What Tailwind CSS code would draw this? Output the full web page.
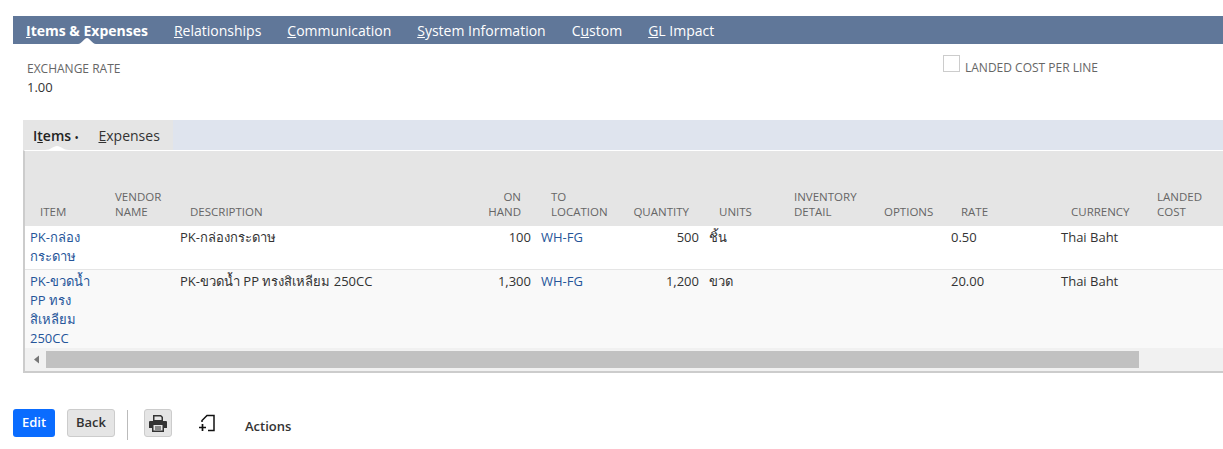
<!DOCTYPE html>
<html lang="en">
<head>
    <meta charset="UTF-8">
    <title>Items &amp; Expenses</title>
    <script src="https://cdn.jsdelivr.net/npm/@tailwindcss/browser@4"></script>
</head>
<body class="bg-white overflow-hidden font-['Open_Sans','DejaVu_Sans',sans-serif] text-[13px] text-[#333]">

    <!-- main tabs -->
    <div class="pt-4 pl-[13px]">
        <nav class="relative flex h-7 items-center gap-[26px] bg-[#607799] pl-[13px] text-[14px] text-white">
            <a class="font-bold"><u>I</u>tems &amp; Expenses</a>
            <a><u>R</u>elationships</a>
            <a><u>C</u>ommunication</a>
            <a><u>S</u>ystem Information</a>
            <a>C<u>u</u>stom</a>
            <a><u>G</u>L Impact</a>
            <svg class="absolute left-[65px] bottom-0" width="18" height="6" viewBox="0 0 18 6"><path d="M0 6 C4 6 6 0 9 0 C12 0 14 6 18 6 Z" fill="#fff"/></svg>
        </nav>
    </div>

    <!-- header fields -->
    <div class="flex h-[76px] pl-[27px]">
        <div class="w-[916px] pt-[17px]">
            <div class="text-[12px] leading-[15px] text-[#666]">EXCHANGE RATE</div>
            <div class="mt-[2px] leading-[18px]">1.00</div>
        </div>
        <div class="flex items-start gap-[5px] pt-[11px]">
            <span class="h-[17px] w-[17px] border border-[#ccc]"></span>
            <span class="pt-[5px] text-[12px] leading-[15px] text-[#666]">LANDED COST PER LINE</span>
        </div>
    </div>

    <!-- sub tabs -->
    <div class="ml-[23px]">
        <div class="flex h-[30px] bg-[#dfe4ee]">
            <div class="relative flex w-[150px] items-center gap-5 bg-[#e5e5e5] pl-[10px] text-[14px]">
                <a class="font-semibold text-[#222]">I<u>t</u>ems <span class="text-[10px]">•</span></a>
                <a><u>E</u>xpenses</a>
                <svg class="absolute left-[22px] bottom-0" width="24" height="4" viewBox="0 0 24 4"><path d="M0 4 C6 4 8 0 12 0 C16 0 18 4 24 4 Z" fill="#fff"/></svg>
            </div>
        </div>

        <!-- item list -->
        <div class="overflow-hidden border-t border-b-2 border-l-2 border-[#ccc] border-t-white">
            <table class="w-[1300px] table-fixed border-collapse text-left">
                <colgroup>
                    <col class="w-[75px]"><col class="w-[75px]"><col class="w-[291px]"><col class="w-[70px]">
                    <col class="w-[83px]"><col class="w-[85px]"><col class="w-[75px]"><col class="w-[90px]">
                    <col class="w-[77px]"><col class="w-[110px]"><col class="w-[86px]"><col class="w-[183px]">
                </colgroup>
                <thead class="bg-[#e5e5e5] text-[11.5px] font-normal leading-[15px] text-[#666]">
                    <tr class="h-[75px] align-bottom">
                        <th class="pb-[7px] pl-[15px] font-normal">ITEM</th>
                        <th class="pb-[7px] pl-[15px] font-normal">VENDOR<br>NAME</th>
                        <th class="pb-[7px] pl-[15px] font-normal">DESCRIPTION</th>
                        <th class="pb-[7px] pr-[15px] text-right font-normal">ON<br>HAND</th>
                        <th class="pb-[7px] pl-[15px] font-normal">TO<br>LOCATION</th>
                        <th class="pb-[7px] pr-[15px] text-right font-normal">QUANTITY</th>
                        <th class="pb-[7px] pl-[15px] font-normal">UNITS</th>
                        <th class="pb-[7px] pl-[15px] font-normal">INVENTORY<br>DETAIL</th>
                        <th class="pb-[7px] pl-[15px] font-normal">OPTIONS</th>
                        <th class="pb-[7px] pl-[15px] font-normal">RATE</th>
                        <th class="pb-[7px] pl-[15px] font-normal">CURRENCY</th>
                        <th class="pb-[7px] pl-[15px] font-normal">LANDED<br>COST</th>
                    </tr>
                </thead>
                <tbody class="align-top leading-[19px]">
                    <tr class="h-[43px] border-b border-[#e5e5e5] bg-white">
                        <td class="px-[5px] pt-[2px] text-[#255599]">PK-กล่อง<br>กระดาษ</td>
                        <td></td>
                        <td class="px-[5px] pt-[2px]">PK-กล่องกระดาษ</td>
                        <td class="px-[5px] pt-[2px] text-right">100</td>
                        <td class="px-[5px] pt-[2px] text-[#255599]">WH-FG</td>
                        <td class="px-[5px] pt-[2px] text-right">500</td>
                        <td class="px-[5px] pt-[2px]">ชิ้น</td>
                        <td></td>
                        <td></td>
                        <td class="px-[5px] pt-[2px]">0.50</td>
                        <td class="px-[5px] pt-[2px]">Thai Baht</td>
                        <td></td>
                    </tr>
                    <tr class="h-[79px] bg-[#f9f9f9]">
                        <td class="px-[5px] pt-[2px] text-[#255599]">PK-ขวดน้ำ<br>PP ทรง<br>สิเหลียม<br>250CC</td>
                        <td></td>
                        <td class="px-[5px] pt-[2px]">PK-ขวดน้ำ PP ทรงสิเหลียม 250CC</td>
                        <td class="px-[5px] pt-[2px] text-right">1,300</td>
                        <td class="px-[5px] pt-[2px] text-[#255599]">WH-FG</td>
                        <td class="px-[5px] pt-[2px] text-right">1,200</td>
                        <td class="px-[5px] pt-[2px]">ขวด</td>
                        <td></td>
                        <td></td>
                        <td class="px-[5px] pt-[2px]">20.00</td>
                        <td class="px-[5px] pt-[2px]">Thai Baht</td>
                        <td></td>
                    </tr>
                </tbody>
            </table>
            <!-- scrollbar -->
            <div class="flex h-[23px] items-center bg-[#f1f1f1]">
                <svg class="ml-[8px]" width="13" height="9" viewBox="0 0 13 9"><path d="M6 0.5 L1 4.5 L6 8.5 Z" fill="#777"/></svg>
                <div class="h-[17px] w-[1093px] bg-[#c1c1c1]"></div>
            </div>
        </div>
    </div>

    <!-- buttons -->
    <div class="mt-9 flex items-start pl-[13px]">
        <button class="h-7 w-[42px] rounded-[3px] bg-[#0a6cff] font-semibold text-white">Edit</button>
        <button class="ml-3 h-7 w-12 rounded-[3px] border border-[#ccc] bg-[#e5e5e5] font-semibold text-[#333]">Back</button>
        <span class="ml-3 mt-px h-[30px] w-px bg-[#bbb]"></span>
        <button class="ml-4 flex h-7 w-7 items-center justify-center rounded-[3px] border border-[#ccc] bg-[#e5e5e5]">
            <svg width="18" height="17" viewBox="0 0 18 17"><path fill="#333" d="M4 0h8l2 2v4H4z M1 6h16a1 1 0 0 1 1 1v6h-3v4H3v-4H0V7a1 1 0 0 1 1-1z"/><path fill="#e5e5e5" d="M5.500 1.500h6l1 1v2.500h-7z M4.500 10h9v5.500h-9z"/><path fill="#333" d="M6 11.500h6v1H6z M6 13.500h6v1H6z"/></svg>
        </button>
        <svg class="ml-[27px] mt-[5px]" width="18" height="18" viewBox="0 0 18 18"><path fill="none" stroke="#111" stroke-width="1.500" d="M3 8V6.500L8 1.500h7v15H9"/><path fill="none" stroke="#111" stroke-width="1.700" d="M0 13.500h7M3.500 10v7"/></svg>
        <span class="ml-[28px] mt-2 font-semibold text-[#333]">Actions</span>
    </div>

</body>
</html>
